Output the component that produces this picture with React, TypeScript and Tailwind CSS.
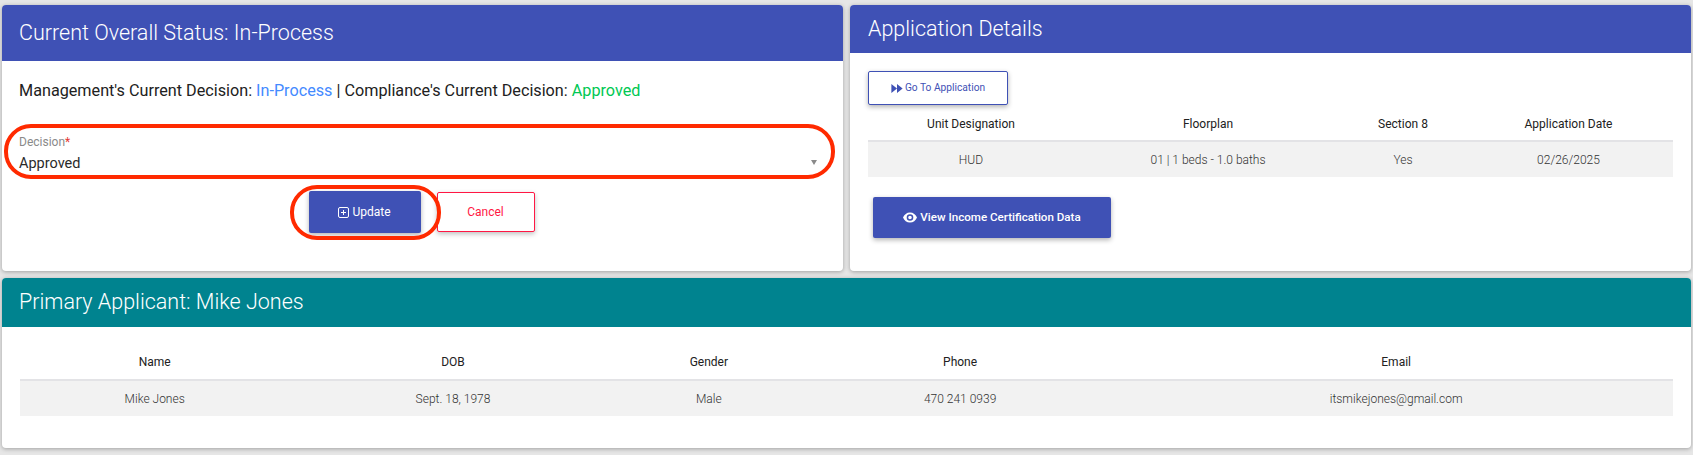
import React from "react";

function Shadowed({ className = "", children }: { className?: string; children: React.ReactNode }) {
  return (
    <div className={`bg-white rounded-[4px] overflow-hidden shadow-[0_1px_4px_rgba(0,0,0,0.3)] ${className}`}>
      {children}
    </div>
  );
}

function Table({ widths, heads, cells, headClass = "" }: { widths: number[]; heads: string[]; cells: string[]; headClass?: string }) {
  return (
    <table className="w-full table-fixed border-collapse text-[12px]">
      <colgroup>
        {widths.map((w, i) => (
          <col key={i} style={{ width: w }} />
        ))}
      </colgroup>
      <thead>
        <tr className="h-[36px] border-b-2 border-[#e3e3e6]">
          {heads.map((h) => (
            <th key={h} className={`font-normal text-[#212121] text-center ${headClass}`}>{h}</th>
          ))}
        </tr>
      </thead>
      <tbody>
        <tr className="h-[36px] bg-[#f2f2f2]">
          {cells.map((c) => (
            <td key={c} className="font-light text-[#333] text-center">{c}</td>
          ))}
        </tr>
      </tbody>
    </table>
  );
}

export default function App() {
  return (
    <div className="min-h-[455px] bg-[#e6e6e6] px-[2px] pt-[5px] pb-[7px] font-['Roboto',sans-serif]">
      <div className="grid grid-cols-[841px_841px] gap-[7px]">
        <Shadowed className="h-[266px]">
          <div className="h-[56px] bg-[#3f51b5] flex items-center px-[17px] text-[21.5px] font-light text-white">
            Current Overall Status: In-Process
          </div>
          <div className="relative">
            <p className="pl-[17px] pt-[20px] text-[16.2px] leading-[20px] text-[#212121]">
              Management's Current Decision: <span className="text-[#448aff]">In-Process</span> | Compliance's Current Decision: <span className="text-[#00c853]">Approved</span>
            </p>
            <div className="relative mt-[34px] px-[17px]">
              <div className="text-[12px] leading-[14px] text-[#8a8a8a]">
                Decision<span className="text-[#e53935]">*</span>
              </div>
              <div className="mt-[5px] text-[14.5px] leading-[20px] text-[#2a2a2a]">Approved</div>
              <div className="absolute right-[26px] top-[25px] w-0 h-0 border-x-[3px] border-x-transparent border-t-[5px] border-t-[#8a8a8a]" />
            </div>
            <div className="flex justify-center gap-[16px] mt-[17px] pr-[2px]">
              <button className="w-[112px] h-[42px] rounded-[2px] bg-[#3f51b5] text-white text-[12px] flex items-center justify-center gap-[3px] shadow-[0_2px_5px_rgba(0,0,0,0.3)]">
                <svg width="11" height="11" viewBox="0 0 11 11" fill="none" stroke="currentColor" strokeWidth="1">
                  <rect x="0.500" y="0.500" width="10" height="10" rx="1.500" />
                  <path d="M5.500 3v5M3 5.500h5" />
                </svg>
                Update
              </button>
              <button className="w-[98px] h-[40px] mt-[1px] rounded-[2px] bg-white border border-[#ff1744] text-[#ff1744] text-[12px] shadow-[0_2px_5px_rgba(0,0,0,0.25)]">
                Cancel
              </button>
            </div>
            <div className="absolute left-[2px] top-[63px] w-[831px] h-[55px] border-[4px] border-[#ff2a00] rounded-[27px] pointer-events-none" />
            <div className="absolute left-[288px] top-[124px] w-[151px] h-[55px] border-[4px] border-[#ff2a00] rounded-[27px] pointer-events-none" />
          </div>
        </Shadowed>
        <Shadowed className="h-[266px]">
          <div className="h-[48px] bg-[#3f51b5] flex items-center px-[18px] text-[21.5px] font-light text-white">
            Application Details
          </div>
          <div className="px-[18px] pt-[18px]">
            <button className="w-[140px] h-[34px] rounded-[2px] bg-white border border-[#3f51b5] text-[#3f51b5] text-[10.2px] flex items-center justify-center gap-[2px] shadow-[0_2px_5px_rgba(0,0,0,0.3)]">
              <svg width="12" height="9" viewBox="0 0 10 8" fill="currentColor">
                <path d="M0 0l5 4-5 4zM5 0l5 4-5 4z" />
              </svg>
              Go To Application
            </button>
            <Table
              widths={[206, 268, 122, 209]}
              heads={["Unit Designation", "Floorplan", "Section 8", "Application Date"]}
              cells={["HUD", "01 | 1 beds - 1.0 baths", "Yes", "02/26/2025"]}
              headClass="pt-[2px]"
            />
            <button className="ml-[5px] mt-[20px] w-[238px] h-[41px] rounded-[2px] bg-[#3f51b5] text-white text-[11.6px] font-medium flex items-center justify-center gap-[3px] shadow-[0_2px_5px_rgba(0,0,0,0.3)]">
              <svg width="14" height="11" viewBox="0 0 14 10" fill="currentColor">
                <path fillRule="evenodd" d="M7 0C3.800 0 1.200 2 0 5c1.200 3 3.800 5 7 5s5.800-2 7-5c-1.200-3-3.800-5-7-5zm0 8.300a3.300 3.300 0 1 1 0-6.600 3.300 3.300 0 0 1 0 6.600zM7 3.200a1.800 1.800 0 1 0 0 3.600 1.800 1.800 0 0 0 0-3.600z" />
              </svg>
              View Income Certification Data
            </button>
          </div>
        </Shadowed>
      </div>
      <Shadowed className="mt-[7px] h-[170px]">
        <div className="h-[49px] bg-[#00838f] flex items-center px-[17px] text-[21.5px] font-light text-white">
          Primary Applicant: Mike Jones
        </div>
        <div className="px-[18px] pt-[17px]">
          <Table
            widths={[269, 327, 184, 318, 553]}
            heads={["Name", "DOB", "Gender", "Phone", "Email"]}
            cells={["Mike Jones", "Sept. 18, 1978", "Male", "470 241 0939", "itsmikejones@gmail.com"]}
          />
        </div>
      </Shadowed>
    </div>
  );
}
